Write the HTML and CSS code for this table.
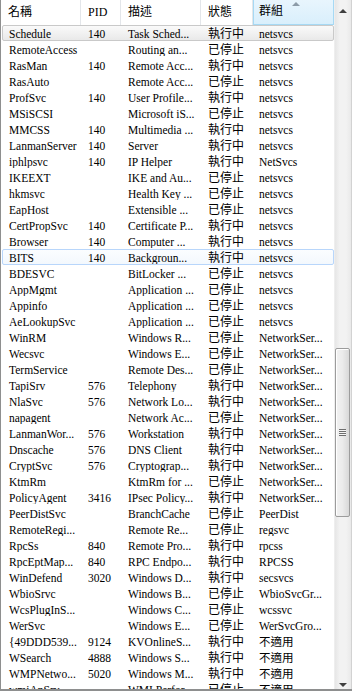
FILE: index.html
```html
<!DOCTYPE html>
<html lang="zh-Hant">
<head>
<meta charset="utf-8">
<title>服務</title>
<link rel="stylesheet" href="styles.css">
</head>
<body>
<div class="listview">
  <div class="pane">
    <div class="head">
      <div class="hcell">名稱</div>
      <div class="hcell">PID</div>
      <div class="hcell">描述</div>
      <div class="hcell">狀態</div>
      <div class="hcell sorted"><span class="sort-arrow"></span>群組</div>
    </div>
    <div class="rows">
      <div class="row selected"><span>Schedule</span><span>140</span><span>Task Sched...</span><span>執行中</span><span>netsvcs</span></div>
      <div class="row"><span>RemoteAccess</span><span></span><span>Routing an...</span><span>已停止</span><span>netsvcs</span></div>
      <div class="row"><span>RasMan</span><span>140</span><span>Remote Acc...</span><span>執行中</span><span>netsvcs</span></div>
      <div class="row"><span>RasAuto</span><span></span><span>Remote Acc...</span><span>已停止</span><span>netsvcs</span></div>
      <div class="row"><span>ProfSvc</span><span>140</span><span>User Profile...</span><span>執行中</span><span>netsvcs</span></div>
      <div class="row"><span>MSiSCSI</span><span></span><span>Microsoft iS...</span><span>已停止</span><span>netsvcs</span></div>
      <div class="row"><span>MMCSS</span><span>140</span><span>Multimedia ...</span><span>執行中</span><span>netsvcs</span></div>
      <div class="row"><span>LanmanServer</span><span>140</span><span>Server</span><span>執行中</span><span>netsvcs</span></div>
      <div class="row"><span>iphlpsvc</span><span>140</span><span>IP Helper</span><span>執行中</span><span>NetSvcs</span></div>
      <div class="row"><span>IKEEXT</span><span></span><span>IKE and Au...</span><span>已停止</span><span>netsvcs</span></div>
      <div class="row"><span>hkmsvc</span><span></span><span>Health Key ...</span><span>已停止</span><span>netsvcs</span></div>
      <div class="row"><span>EapHost</span><span></span><span>Extensible ...</span><span>已停止</span><span>netsvcs</span></div>
      <div class="row"><span>CertPropSvc</span><span>140</span><span>Certificate P...</span><span>執行中</span><span>netsvcs</span></div>
      <div class="row"><span>Browser</span><span>140</span><span>Computer ...</span><span>執行中</span><span>netsvcs</span></div>
      <div class="row hover"><span>BITS</span><span>140</span><span>Backgroun...</span><span>執行中</span><span>netsvcs</span></div>
      <div class="row"><span>BDESVC</span><span></span><span>BitLocker ...</span><span>已停止</span><span>netsvcs</span></div>
      <div class="row"><span>AppMgmt</span><span></span><span>Application ...</span><span>已停止</span><span>netsvcs</span></div>
      <div class="row"><span>Appinfo</span><span></span><span>Application ...</span><span>已停止</span><span>netsvcs</span></div>
      <div class="row"><span>AeLookupSvc</span><span></span><span>Application ...</span><span>已停止</span><span>netsvcs</span></div>
      <div class="row"><span>WinRM</span><span></span><span>Windows R...</span><span>已停止</span><span>NetworkSer...</span></div>
      <div class="row"><span>Wecsvc</span><span></span><span>Windows E...</span><span>已停止</span><span>NetworkSer...</span></div>
      <div class="row"><span>TermService</span><span></span><span>Remote Des...</span><span>已停止</span><span>NetworkSer...</span></div>
      <div class="row"><span>TapiSrv</span><span>576</span><span>Telephony</span><span>執行中</span><span>NetworkSer...</span></div>
      <div class="row"><span>NlaSvc</span><span>576</span><span>Network Lo...</span><span>執行中</span><span>NetworkSer...</span></div>
      <div class="row"><span>napagent</span><span></span><span>Network Ac...</span><span>已停止</span><span>NetworkSer...</span></div>
      <div class="row"><span>LanmanWor...</span><span>576</span><span>Workstation</span><span>執行中</span><span>NetworkSer...</span></div>
      <div class="row"><span>Dnscache</span><span>576</span><span>DNS Client</span><span>執行中</span><span>NetworkSer...</span></div>
      <div class="row"><span>CryptSvc</span><span>576</span><span>Cryptograp...</span><span>執行中</span><span>NetworkSer...</span></div>
      <div class="row"><span>KtmRm</span><span></span><span>KtmRm for ...</span><span>已停止</span><span>NetworkSer...</span></div>
      <div class="row"><span>PolicyAgent</span><span>3416</span><span>IPsec Policy...</span><span>執行中</span><span>NetworkSer...</span></div>
      <div class="row"><span>PeerDistSvc</span><span></span><span>BranchCache</span><span>已停止</span><span>PeerDist</span></div>
      <div class="row"><span>RemoteRegi...</span><span></span><span>Remote Re...</span><span>已停止</span><span>regsvc</span></div>
      <div class="row"><span>RpcSs</span><span>840</span><span>Remote Pro...</span><span>執行中</span><span>rpcss</span></div>
      <div class="row"><span>RpcEptMap...</span><span>840</span><span>RPC Endpo...</span><span>執行中</span><span>RPCSS</span></div>
      <div class="row"><span>WinDefend</span><span>3020</span><span>Windows D...</span><span>執行中</span><span>secsvcs</span></div>
      <div class="row"><span>WbioSrvc</span><span></span><span>Windows B...</span><span>已停止</span><span>WbioSvcGr...</span></div>
      <div class="row"><span>WcsPlugInS...</span><span></span><span>Windows C...</span><span>已停止</span><span>wcssvc</span></div>
      <div class="row"><span>WerSvc</span><span></span><span>Windows E...</span><span>已停止</span><span>WerSvcGro...</span></div>
      <div class="row"><span>{49DDD539...</span><span>9124</span><span>KVOnlineS...</span><span>執行中</span><span>不適用</span></div>
      <div class="row"><span>WSearch</span><span>4888</span><span>Windows S...</span><span>執行中</span><span>不適用</span></div>
      <div class="row"><span>WMPNetwo...</span><span>5020</span><span>Windows M...</span><span>執行中</span><span>不適用</span></div>
      <div class="row"><span>wmiApSrv</span><span></span><span>WMI Perfor...</span><span>已停止</span><span>不適用</span></div>
    </div>
  </div>
  <div class="scrollbar">
    <div class="sb-btn"><span class="arrow up"></span></div>
    <div class="sb-track">
      <div class="sb-gap top"></div>
      <div class="sb-thumb"><span class="grip"></span></div>
      <div class="sb-gap bottom"></div>
    </div>
    <div class="sb-btn"><span class="arrow down"></span></div>
  </div>
</div>
</body>
</html>
```
FILE: styles.css
```css
* { box-sizing: border-box; }

html, body {
  margin: 0;
  padding: 0;
  background: #ffffff;
}

body {
  font-family: "Liberation Serif", "Noto Sans CJK TC", serif;
  font-size: 11.5px;
  color: #000;
}

.listview {
  display: flex;
  width: 352px;
  height: 691px;
  border-left: 1px solid #8e8f8f;
  border-bottom: 2px solid #8e8f8f;
  overflow: hidden;
}

.pane {
  width: 333px;
  flex: none;
  overflow: hidden;
}

/* column header */
.head {
  display: grid;
  grid-template-columns: 80px 40px 80px 52px 81px;
  height: 25px;
  background: #fff;
}

.hcell {
  position: relative;
  padding-left: 7px;
  font-size: 12px;
  line-height: 24px;
  border-right: 1px solid #e3e6ea;
  white-space: nowrap;
}

.hcell.sorted {
  background: linear-gradient(#e8f5fd, #d9effc);
  border: 1px solid #a6d9f4;
  border-top: 0;
  padding-left: 5px;
  line-height: 23px;
}

.sort-arrow {
  position: absolute;
  left: 38px;
  top: 2px;
  width: 0;
  height: 0;
  border-left: 4px solid transparent;
  border-right: 4px solid transparent;
  border-bottom: 4px solid #8c9ba8;
}

/* rows */
.row {
  display: grid;
  grid-template-columns: 80px 40px 80px 52px 81px;
  height: 16px;
  line-height: 16px;
  white-space: nowrap;
  border: 1px solid transparent;
  border-radius: 2px;
  margin-left: 1px;
}

.row span {
  overflow: hidden;
  padding-left: 5px;
}

.row span:first-child { padding-left: 6px; }
.row span:nth-child(4) { font-size: 12px; }
.row span:nth-child(5) { padding-left: 4px; }

.row.selected {
  background: linear-gradient(#fafafa, #e9e9e9);
  border-color: #c9c9c9;
}

.row.hover {
  background: linear-gradient(#fbfdff, #f3f8fd);
  border-color: #b8d6fb;
}

/* vertical scrollbar */
.scrollbar {
  width: 18px;
  flex: none;
  display: flex;
  flex-direction: column;
  background: linear-gradient(90deg, #e6e6e6, #f2f2f2 30%, #f2f2f2 70%, #e9e9e9);
  border-left: 1px solid #eeeeee;
  border-right: 1px solid #d2d2d2;
}

.sb-btn {
  height: 17px;
  flex: none;
  display: flex;
  align-items: center;
  justify-content: center;
}

.arrow {
  width: 0;
  height: 0;
  border-left: 4px solid transparent;
  border-right: 4px solid transparent;
}

.arrow.up { border-bottom: 4px solid #3f3f3f; margin-top: 4px; }
.arrow.down { border-top: 4px solid #3f3f3f; margin-top: 8px; }

.sb-track {
  flex: 1;
  display: flex;
  flex-direction: column;
}

.sb-gap.top { height: 331px; flex: none; }
.sb-gap.bottom { flex: 1; }

.sb-thumb {
  height: 169px;
  flex: none;
  margin: 0 1px 0 0;
  border: 1px solid #9c9c9c;
  border-radius: 2px;
  background: linear-gradient(90deg, #f2f2f2, #ebebeb 50%, #d8d8d8);
  box-shadow: inset 1px 1px 0 #ffffff;
  display: flex;
  align-items: center;
  justify-content: center;
}

.grip {
  width: 7px;
  height: 7px;
  background: repeating-linear-gradient(#6e6e6e 0 1px, #f5f5f5 1px 2px);
}
```
